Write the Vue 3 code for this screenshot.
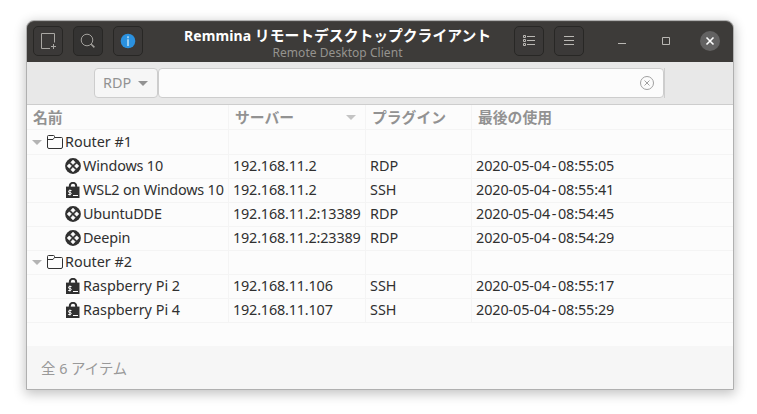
<script setup>
const rows = [
  { group: true, name: 'Router #1' },
  { icon: 'rdp', name: 'Windows 10', server: '192.168.11.2', plugin: 'RDP', used: '2020-05-04 - 08:55:05' },
  { icon: 'ssh', name: 'WSL2 on Windows 10', server: '192.168.11.2', plugin: 'SSH', used: '2020-05-04 - 08:55:41' },
  { icon: 'rdp', name: 'UbuntuDDE', server: '192.168.11.2:13389', plugin: 'RDP', used: '2020-05-04 - 08:54:45' },
  { icon: 'rdp', name: 'Deepin', server: '192.168.11.2:23389', plugin: 'RDP', used: '2020-05-04 - 08:54:29' },
  { group: true, name: 'Router #2' },
  { icon: 'ssh', name: 'Raspberry Pi 2', wide: true, server: '192.168.11.106', plugin: 'SSH', used: '2020-05-04 - 08:55:17' },
  { icon: 'ssh', name: 'Raspberry Pi 4', wide: true, server: '192.168.11.107', plugin: 'SSH', used: '2020-05-04 - 08:55:29' },
]
</script>

<template>
  <div class="desktop">
    <div class="window">
      <header class="titlebar">
        <div class="side">
          <button class="tb">
            <svg width="16" height="16" viewBox="0 0 16 16" fill="none" stroke="#a9a7a3">
              <path d="M10 15.500H1.500V.5h13v9M13.500 11v5M11 13.500h5" />
            </svg>
          </button>
          <button class="tb search">
            <svg width="16" height="16" viewBox="0 0 16 16" fill="none" stroke="#a3a19d">
              <circle cx="7" cy="7" r="5.800" /><path d="M11.200 11.200l3.200 3.200" stroke-width="1.500" />
            </svg>
          </button>
          <button class="tb">
            <svg width="16" height="16" viewBox="0 0 16 16">
              <circle cx="8" cy="8" r="7.300" fill="#2b91df" />
              <path d="M7.200 3.200h1.600v2H7.200zM7.200 6.200h1.600V13H7.200z" fill="#b4dcf6" />
            </svg>
          </button>
        </div>
        <div class="titles">
          <div class="title"><span class="latin">Remmina</span> <span class="kana">リモートデスクトップクライアント</span></div>
          <div class="subtitle">Remote Desktop Client</div>
        </div>
        <div class="side right">
          <button class="tb">
            <svg width="14" height="12" viewBox="0 0 14 12" fill="none" stroke="#bab8b4">
              <path d="M1.500 .5h2v2h-2zM1.500 4.500h2v2h-2zM1.500 8.500h2v2h-2zM5 1.500h8M5 5.500h8M5 9.500h8" />
            </svg>
          </button>
          <button class="tb menu">
            <svg width="10" height="10" viewBox="0 0 10 10" stroke="#bab8b4">
              <path d="M0 .5h10M0 4.500h10M0 8.500h10" />
            </svg>
          </button>
          <svg class="min" width="8" height="10" viewBox="0 0 8 10" stroke="#bab8b4"><path d="M0 9.500h8" /></svg>
          <svg class="max" width="8" height="8" viewBox="0 0 8 8" fill="none" stroke="#bab8b4"><path d="M.5.5h7v7h-7z" /></svg>
          <svg class="close" width="20" height="20" viewBox="0 0 20 20">
            <circle cx="10" cy="10" r="10" fill="#636262" />
            <path d="M6.500 6.500l7 7M13.500 6.500l-7 7" stroke="#fff" stroke-width="1.600" />
          </svg>
        </div>
      </header>

      <div class="toolbar">
        <div class="combo">
          <span>RDP</span>
          <svg width="10" height="5" viewBox="0 0 10 5"><path d="M0 0h10L5 5z" fill="#929292" /></svg>
        </div>
        <div class="entry">
          <svg width="14" height="14" viewBox="0 0 14 14" fill="none" stroke="#a0a0a0">
            <circle cx="7" cy="7" r="6.500" /><path d="M4.500 4.500l5 5M9.500 4.500l-5 5" />
          </svg>
        </div>
        <div class="edge"></div>
      </div>

      <div class="tree">
        <div class="row head">
          <div class="cell">名前</div>
          <div class="cell">サーバー
            <svg class="sort" width="10" height="5" viewBox="0 0 10 5"><path d="M0 0h10L5 5z" fill="#c4c4c4" /></svg>
          </div>
          <div class="cell">プラグイン</div>
          <div class="cell">最後の使用</div>
        </div>
        <div v-for="(row, i) in rows" :key="i" class="row">
          <div class="cell name" :class="{ group: row.group, wide: row.wide }">
            <template v-if="row.group">
              <svg class="arrow" width="10" height="5" viewBox="0 0 10 5"><path d="M0 0h10L5 5z" fill="#b4b4b4" /></svg>
              <svg class="folder" width="16" height="14" viewBox="0 0 16 14" fill="none" stroke="#303030" stroke-linejoin="round">
                <path d="M.5 12V1.500q0-1 1-1h5q1 0 1 1v1h7q1 0 1 1V12q0 1.500-1.500 1.500H2Q.5 13.500.5 12zM.5 4.500h5.500l1.500-2" />
              </svg>
            </template>
            <svg v-else-if="row.icon === 'rdp'" class="icon" width="16" height="16" viewBox="0 0 16 16">
              <circle cx="8" cy="8" r="7.900" fill="#303030" />
              <path d="M8 2.100l2.200 2.200L8 6.500 5.800 4.300zM8 9.500l2.200 2.200L8 13.900l-2.200-2.200zM4.300 5.800L6.500 8l-2.200 2.200L2.100 8zM11.700 5.800L13.900 8l-2.200 2.200L9.500 8z" fill="#fcfcfc" stroke="#fcfcfc" stroke-width=".5" stroke-linejoin="round" />
            </svg>
            <svg v-else class="icon" width="16" height="16" viewBox="0 0 16 16">
              <path d="M4.800 6V4a3.200 3.200 0 0 1 6.400 0v2" fill="none" stroke="#303030" stroke-width="2" />
              <path d="M1 4.600h13.500V16H1z" fill="#303030" />
              <path d="M6.500 8.500H4.500q-1 0-1 1t1 1h.7q1 0 1 1t-1 1H3.200M4.900 7.500v6M8 13.500h5" fill="none" stroke="#fcfcfc" />
            </svg>
            <span>{{ row.name }}</span>
          </div>
          <div class="cell server">{{ row.server }}</div>
          <div class="cell plugin">{{ row.plugin }}</div>
          <div class="cell used">{{ row.used }}</div>
        </div>
      </div>

      <footer class="status">全 6 アイテム</footer>
    </div>
  </div>
</template>

<style>
body { background: #fff; overflow: hidden; }
</style>

<style scoped>
* { box-sizing: border-box; }
.desktop {
  width: 757px; height: 414px; padding: 20px 23px 24px 26px; background: #fff;
  font: 14.4px/24px "Noto Sans", "Noto Sans CJK JP", sans-serif; color: #303030;
}
.window {
  display: flex; flex-direction: column; width: 708px; height: 370px;
  border: 1px solid #b0b0b0; border-radius: 8px 8px 0 0; background: #fcfcfc;
  box-shadow: 0 3px 12px 1px rgba(0, 0, 0, .24);
}
.titlebar {
  display: flex; height: 41px; padding: 4px 12px 0 6px; flex: none;
  background: #3d3b39; border-radius: 7px 7px 0 0; border-top: 1px solid #4a4846;
}
.side { display: flex; gap: 10px; width: 120px; }
.tb {
  display: flex; align-items: center; justify-content: center; width: 30px; height: 30px; padding: 0;
  border: 1px solid #282725; border-radius: 5px; background: #3b3938; flex: none;
}
.tb.search { background: #343332; }
.titles { flex: 1; text-align: center; padding-left: 8px; white-space: nowrap; }
.title {
  height: 19px; line-height: 18px; color: #fff; font-weight: 700; font-size: 14px;
}
.latin { letter-spacing: .1px; }
.kana { font: 700 14.800px/18px "Noto Sans CJK JP", sans-serif; }
.subtitle { height: 16px; line-height: 16px; font-size: 12px; color: #95938f; letter-spacing: .05px; }
.right { width: 207px; }
.min { margin: 8px 0 0 24px; }
.max { margin: 11px 0 0 26px; }
.close { margin: 5px 0 0 20px; }
.toolbar {
  display: flex; height: 43px; padding: 6px 0 0 67px; flex: none;
  background: #e8e8e8; border-bottom: 1px solid #cdcdcd;
}
.combo {
  display: flex; align-items: center; justify-content: space-between; width: 64px; height: 30px;
  padding: 0 9px 0 8px; border: 1px solid #cdcdcd; border-radius: 4px; background: #f6f6f6; color: #929292;
}
.entry {
  display: flex; align-items: center; justify-content: flex-end; width: 506px; height: 30px;
  padding-right: 9px; border: 1px solid #cdcdcd; border-radius: 4px; background: #fcfcfc;
}
.edge { width: 1px; height: 30px; background: #cdcdcd; }
.tree { flex: 1; }
.row { display: grid; grid-template-columns: 202px 137px 106px 1fr; height: 24px; }
.cell {
  display: flex; align-items: center; padding-left: 4px; white-space: nowrap;
  border-right: 1px solid #f4f4f4; border-bottom: 1px solid #f4f4f4;
}
.cell:last-child { border-right: 0; }
.head { height: 25px; color: #929292; font-weight: 700; font-size: 14.800px; }
.head .cell { padding-left: 6px; border-bottom-width: 1px; font-family: "Noto Sans CJK JP", sans-serif; }
.sort { margin: 0 9px 0 auto; }
.name { padding-left: 38px; letter-spacing: -.17px; }
.name.group { padding-left: 5px; letter-spacing: 0; }
.name.wide { letter-spacing: 0; }
.server { letter-spacing: -.17px; }
.used { letter-spacing: -.1px; word-spacing: -2px; }
.icon { margin-right: 2px; flex: none; }
.arrow { margin-right: 5px; }
.folder { margin-right: 2px; }
.status {
  flex: none; height: 43px; padding-left: 14px; line-height: 46px; background: #f6f6f6; color: #999;
}
</style>
